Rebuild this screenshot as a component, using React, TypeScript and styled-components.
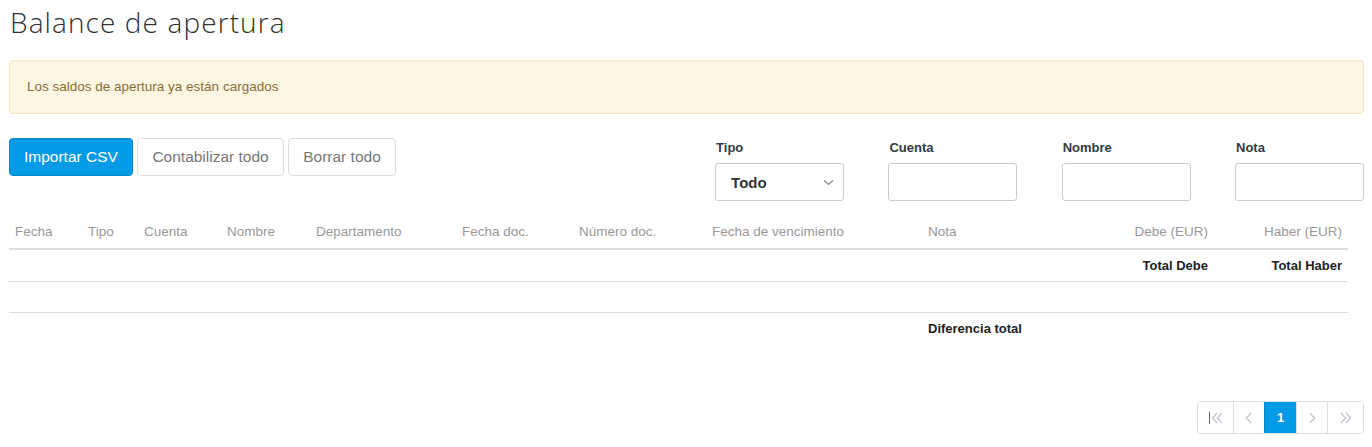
import React, { FC } from "react";
import styled, { createGlobalStyle } from "styled-components";

const GlobalStyle = createGlobalStyle`
  body {
    margin: 0;
    background: #fff;
    font-family: "Liberation Sans", Arial, sans-serif;
    color: #333;
  }
`;

const Page = styled.div`
  padding: 0 8px 0 9px;
`;

const Title = styled.h1`
  font-family: "Open Sans", sans-serif;
  font-weight: 300;
  font-size: 28px;
  letter-spacing: 1.1px;
  line-height: 40px;
  color: #333;
  margin: 0;
  padding: 2px 0 0 1px;
`;

const Alert = styled.div`
  margin-top: 18px;
  background: #fcf6e2;
  border: 1px solid #f8e5c0;
  border-radius: 4px;
  color: #8a6d3b;
  font-size: 13.5px;
  line-height: 16px;
  padding: 18px 17px;
`;

const Toolbar = styled.div`
  display: flex;
  justify-content: space-between;
  align-items: flex-start;
  margin-top: 24px;
`;

const Buttons = styled.div`
  display: flex;
  gap: 4.5px;
`;

const Button = styled.button<{ $primary?: boolean }>`
  height: 38px;
  padding: 0 14px;
  font-family: "Liberation Sans", Arial, sans-serif;
  font-size: 15.5px;
  border-radius: 4px;
  border: 1px solid ${(p) => (p.$primary ? "#0288c9" : "#dedede")};
  background: ${(p) => (p.$primary ? "#039be5" : "#fff")};
  color: ${(p) => (p.$primary ? "#fff" : "#777")};
  cursor: pointer;
`;

const Filters = styled.div`
  display: flex;
  gap: 44.3px;
`;

const Field = styled.label`
  display: flex;
  flex-direction: column;
  width: 129px;
`;

const FieldLabel = styled.span`
  font-size: 13px;
  font-weight: bold;
  color: #2f3b45;
  line-height: 16px;
  margin: 2px 0 7px 1px;
`;

const Input = styled.input`
  box-sizing: border-box;
  height: 38px;
  width: 100%;
  border: 1px solid #ccc;
  border-radius: 3px;
  background: #fff;
`;

const Select = styled.div`
  box-sizing: border-box;
  height: 38px;
  width: 100%;
  border: 1px solid #ccc;
  border-radius: 3px;
  display: flex;
  align-items: center;
  justify-content: space-between;
  padding: 0 9px 0 15px;
  font-size: 15px;
  font-weight: bold;
  color: #333;
`;

const Table = styled.table`
  width: 1339px;
  table-layout: fixed;
  border-collapse: collapse;
  margin-top: 15px;
  font-size: 13.5px;
`;

const Th = styled.th<{ $right?: boolean }>`
  text-align: ${(p) => (p.$right ? "right" : "left")};
  font-weight: normal;
  color: #999;
  padding: 8px 6px;
  line-height: 16px;
  border-bottom: 2px solid #ddd;
  white-space: nowrap;
`;

const Row = styled.tr<{ $last?: boolean }>`
  border-bottom: ${(p) => (p.$last ? "none" : "1px solid #ddd")};
`;

const Td = styled.td<{ $right?: boolean; $blank?: boolean }>`
  text-align: ${(p) => (p.$right ? "right" : "left")};
  font-weight: bold;
  font-size: 13px;
  color: #222;
  padding: 7px 6px;
  line-height: ${(p) => (p.$blank ? "16px" : "17px")};
  height: ${(p) => (p.$blank ? "16px" : "17px")};
  white-space: nowrap;
`;

const PagerRow = styled.div`
  display: flex;
  justify-content: flex-end;
  margin-top: 57px;
`;

const Pager = styled.div`
  display: flex;
  border: 1px solid #ddd;
  border-radius: 4px;
  overflow: hidden;
  height: 31px;
`;

const PageButton = styled.div<{ $active?: boolean; $w: number }>`
  box-sizing: border-box;
  width: ${(p) => p.$w}px;
  display: flex;
  align-items: center;
  justify-content: center;
  border-left: 1px solid ${(p) => (p.$active ? "#0288c9" : "#ddd")};
  background: ${(p) => (p.$active ? "#039be5" : "#fff")};
  color: #fff;
  font-size: 13px;
  font-weight: bold;
  &:first-child {
    border-left: none;
  }
`;

const Chevron: FC<{ d: string; bar?: boolean }> = ({ d, bar }) => (
  <svg width="18" height="16" viewBox="0 0 18 16">
    {bar && <line x1="2.5" y1="2" x2="2.5" y2="14" stroke="#666" strokeWidth="1" />}
    <path d={d} fill="none" stroke="#c8ccd2" strokeWidth="1.6" />
  </svg>
);

const columns = [
  { label: "Fecha", w: 73 },
  { label: "Tipo", w: 56 },
  { label: "Cuenta", w: 83 },
  { label: "Nombre", w: 89 },
  { label: "Departamento", w: 146 },
  { label: "Fecha doc.", w: 117 },
  { label: "Número doc.", w: 133 },
  { label: "Fecha de vencimiento", w: 216 },
  { label: "Nota", w: 158 },
  { label: "Debe (EUR)", w: 134, right: true },
  { label: "Haber (EUR)", w: 134, right: true },
];

const App: FC = () => {
  return (
    <Page>
      <GlobalStyle />
      <Title>Balance de apertura</Title>
      <Alert>Los saldos de apertura ya están cargados</Alert>

      <Toolbar>
        <Buttons>
          <Button $primary>Importar CSV</Button>
          <Button>Contabilizar todo</Button>
          <Button>Borrar todo</Button>
        </Buttons>
        <Filters>
          <Field>
            <FieldLabel>Tipo</FieldLabel>
            <Select>
              <span>Todo</span>
              <svg width="11" height="7" viewBox="0 0 11 7">
                <path d="M1 1.5 L5.5 5.5 L10 1.5" fill="none" stroke="#888" strokeWidth="1.3" />
              </svg>
            </Select>
          </Field>
          <Field>
            <FieldLabel>Cuenta</FieldLabel>
            <Input />
          </Field>
          <Field>
            <FieldLabel>Nombre</FieldLabel>
            <Input />
          </Field>
          <Field>
            <FieldLabel>Nota</FieldLabel>
            <Input />
          </Field>
        </Filters>
      </Toolbar>

      <Table>
        <colgroup>
          {columns.map((c) => (
            <col key={c.label} style={{ width: c.w }} />
          ))}
        </colgroup>
        <thead>
          <tr>
            {columns.map((c) => (
              <Th key={c.label} $right={c.right}>
                {c.label}
              </Th>
            ))}
          </tr>
        </thead>
        <tbody>
          <Row>
            <Td colSpan={9} />
            <Td $right>Total Debe</Td>
            <Td $right>Total Haber</Td>
          </Row>
          <Row>
            <Td colSpan={11} $blank />
          </Row>
          <Row $last>
            <Td colSpan={8} />
            <Td>Diferencia total</Td>
            <Td />
            <Td />
          </Row>
        </tbody>
      </Table>

      <PagerRow>
        <Pager>
          <PageButton $w={35}>
            <Chevron bar d="M10 3 L5.5 8 L10 13 M15 3 L10.5 8 L15 13" />
          </PageButton>
          <PageButton $w={31}>
            <Chevron d="M11 3 L6.5 8 L11 13" />
          </PageButton>
          <PageButton $w={32} $active>
            1
          </PageButton>
          <PageButton $w={31}>
            <Chevron d="M7 3 L11.5 8 L7 13" />
          </PageButton>
          <PageButton $w={36}>
            <Chevron d="M4 3 L8.5 8 L4 13 M9 3 L13.5 8 L9 13" />
          </PageButton>
        </Pager>
      </PagerRow>
    </Page>
  );
};

export default App;
